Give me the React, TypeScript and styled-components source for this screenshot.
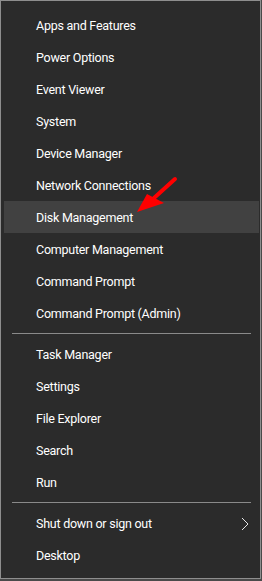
import React from "react";
import styled, { createGlobalStyle } from "styled-components";

const Global = createGlobalStyle`
  html, body { margin: 0; padding: 0; background: #4a4a4a; }
  body { width: 262px; height: 581px; overflow: hidden; }
`;

const Menu = styled.div`
  position: relative;
  box-sizing: border-box;
  width: 261px;
  height: 579px;
  background: #2b2b2b;
  border: 1px solid #8e8e8e;
  padding: 8px 0 7px;
  display: flex;
  flex-direction: column;
  font-family: "Roboto", "Open Sans", sans-serif;
  font-size: 12.5px;
  letter-spacing: -0.25px;
  color: #ffffff;
`;

const Item = styled.div<{ $active?: boolean }>`
  height: 32px;
  flex: none;
  display: flex;
  align-items: center;
  justify-content: space-between;
  margin: 0 1px 0 3px;
  padding: 0 10px 0 32px;
  background: ${(p) => (p.$active ? "#414141" : "transparent")};
  white-space: nowrap;
`;

const Label = styled.span`
  line-height: 16px;
  padding-top: 2px;
`;

const Separator = styled.div`
  height: 9px;
  flex: none;
  display: flex;
  align-items: center;
  margin: 0 9px 0 11px;
  &::after {
    content: "";
    display: block;
    width: 100%;
    height: 1px;
    background: #8a8a8a;
  }
`;

const Chevron = styled.svg`
  width: 8px;
  height: 14px;
  display: block;
  margin-top: 1px;
`;

const Arrow = styled.svg`
  position: absolute;
  left: -1px;
  top: -1px;
  width: 262px;
  height: 581px;
  pointer-events: none;
`;

const groups: string[][] = [
  [
    "Apps and Features",
    "Power Options",
    "Event Viewer",
    "System",
    "Device Manager",
    "Network Connections",
    "Disk Management",
    "Computer Management",
    "Command Prompt",
    "Command Prompt (Admin)",
  ],
  ["Task Manager", "Settings", "File Explorer", "Search", "Run"],
  ["Shut down or sign out", "Desktop"],
];

export default function App() {
  return (
    <>
      <Global />
      <Menu>
        {groups.map((g, gi) => (
          <React.Fragment key={gi}>
            {gi > 0 && <Separator />}
            {g.map((label) => (
              <Item key={label} $active={label === "Disk Management"}>
                <Label>{label}</Label>
                {label === "Shut down or sign out" && (
                  <Chevron viewBox="0 0 8 14">
                    <path d="M1 1 L7 7 L1 13" fill="none" stroke="#e6e6e6" strokeWidth="1" />
                  </Chevron>
                )}
              </Item>
            ))}
          </React.Fragment>
        ))}
        <Arrow viewBox="0 0 262 581">
          <line x1="175" y1="179" x2="154" y2="198" stroke="#ff0000" strokeWidth="4" strokeLinecap="round" />
          <polygon points="137,212 147,194 164,203" fill="#ff0000" />
        </Arrow>
      </Menu>
    </>
  );
}
